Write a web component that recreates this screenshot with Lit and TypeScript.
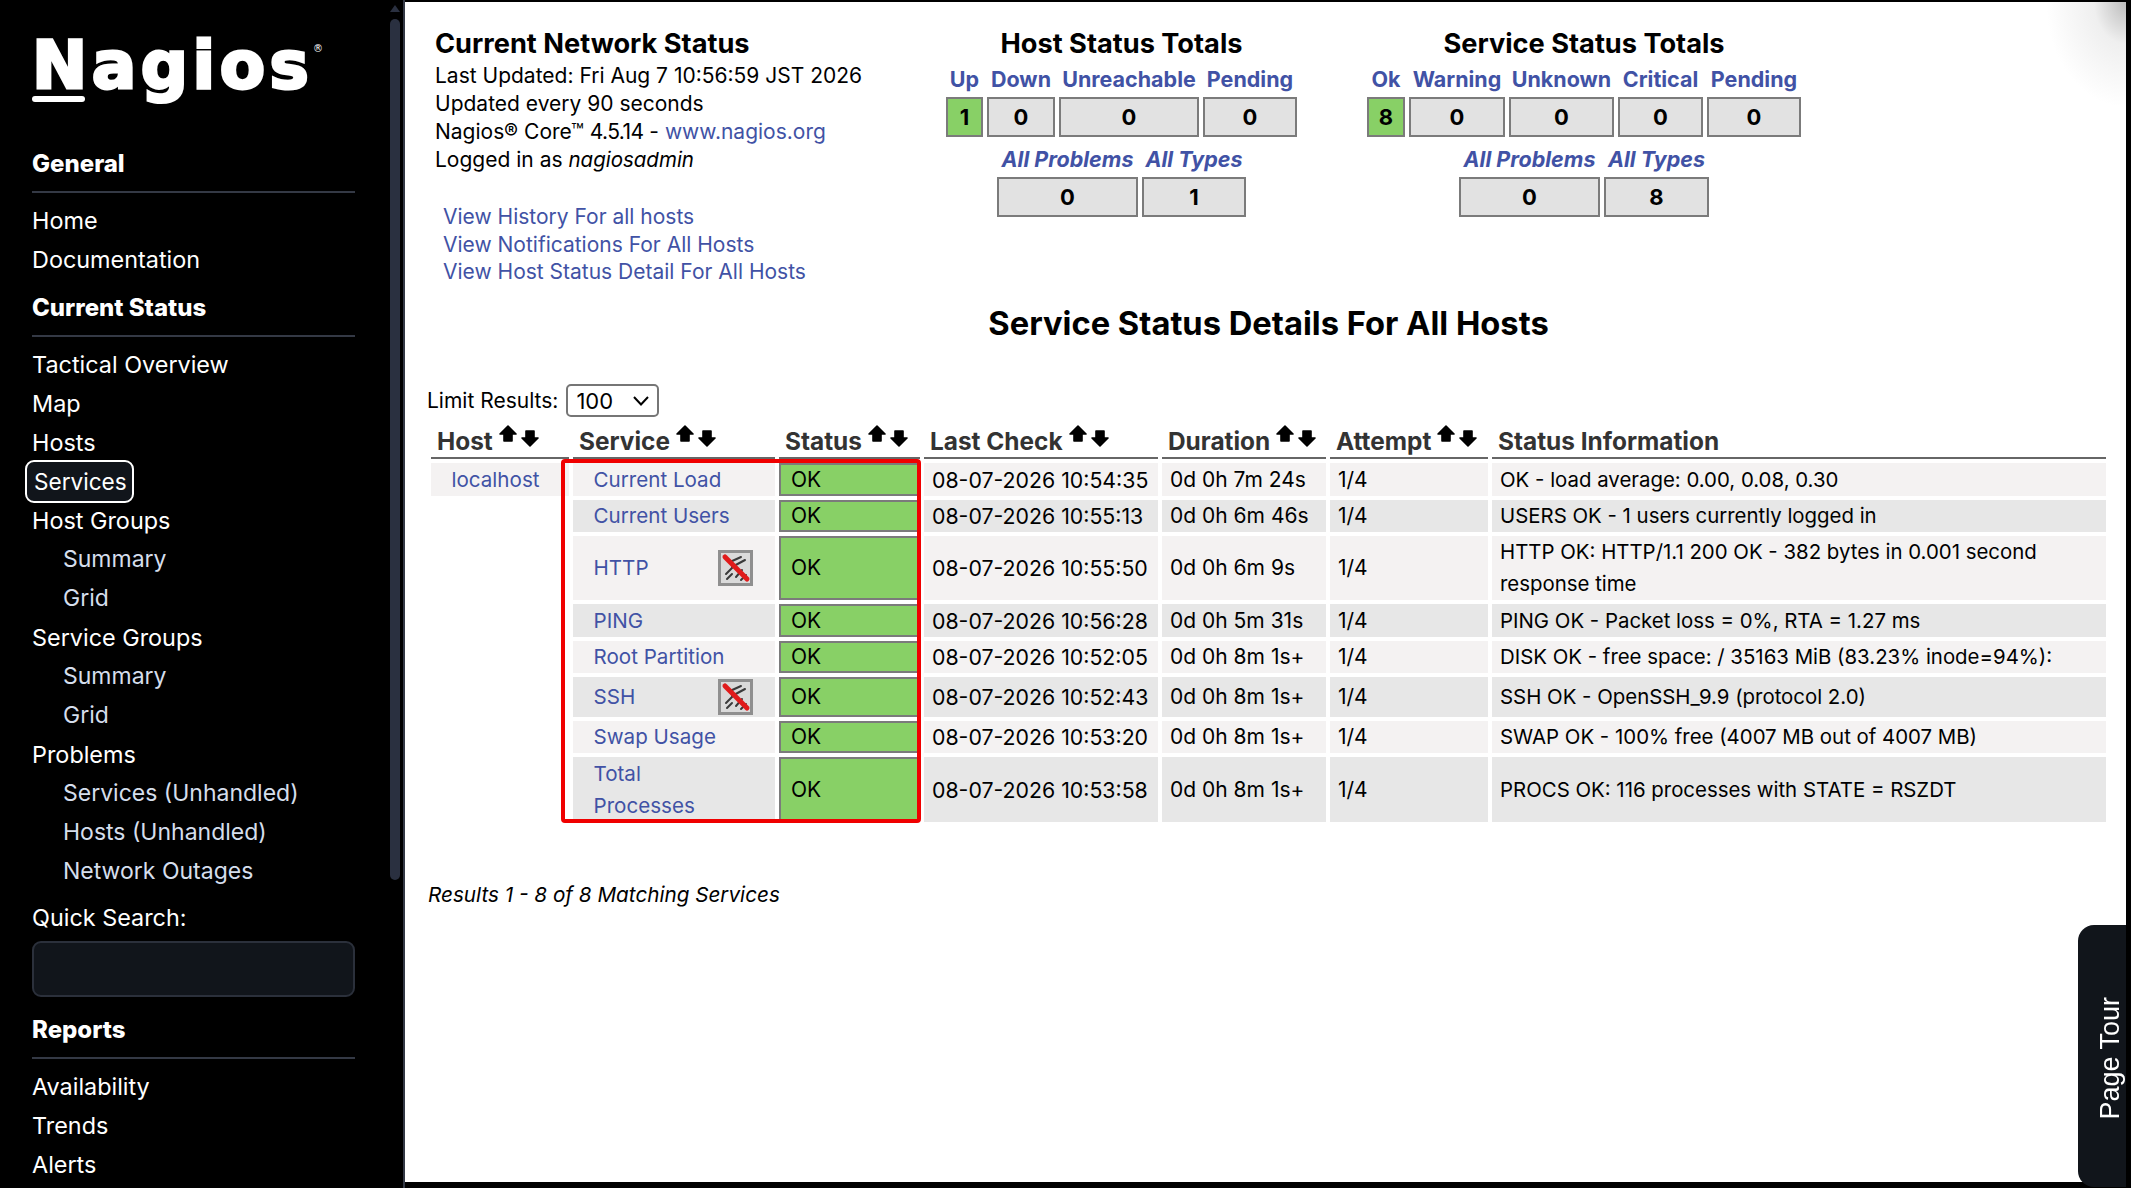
import { LitElement, html, css, svg } from 'lit'
import { customElement } from 'lit/decorators.js'

type NavItem = { label: string; sub?: boolean; active?: boolean }

const GENERAL: NavItem[] = [{ label: 'Home' }, { label: 'Documentation' }]
const CURRENT: NavItem[] = [
  { label: 'Tactical Overview' },
  { label: 'Map' },
  { label: 'Hosts' },
  { label: 'Services', active: true },
  { label: 'Host Groups' },
  { label: 'Summary', sub: true },
  { label: 'Grid', sub: true },
  { label: 'Service Groups' },
  { label: 'Summary', sub: true },
  { label: 'Grid', sub: true },
  { label: 'Problems' },
  { label: 'Services (Unhandled)', sub: true },
  { label: 'Hosts (Unhandled)', sub: true },
  { label: 'Network Outages', sub: true },
]
const REPORTS: NavItem[] = [{ label: 'Availability' }, { label: 'Trends' }, { label: 'Alerts' }]

const ROWS = [
  { service: ['Current Load'], h: 33, last: '08-07-2026 10:54:35', dur: '0d 0h 7m 24s', info: ['OK - load average: 0.00, 0.08, 0.30'] },
  { service: ['Current Users'], h: 32, last: '08-07-2026 10:55:13', dur: '0d 0h 6m 46s', info: ['USERS OK - 1 users currently logged in'] },
  { service: ['HTTP'], h: 64, icon: true, last: '08-07-2026 10:55:50', dur: '0d 0h 6m 9s', info: ['HTTP OK: HTTP/1.1 200 OK - 382 bytes in 0.001 second', 'response time'] },
  { service: ['PING'], h: 33, last: '08-07-2026 10:56:28', dur: '0d 0h 5m 31s', info: ['PING OK - Packet loss = 0%, RTA = 1.27 ms'] },
  { service: ['Root Partition'], h: 32, last: '08-07-2026 10:52:05', dur: '0d 0h 8m 1s+', info: ['DISK OK - free space: / 35163 MiB (83.23% inode=94%):'] },
  { service: ['SSH'], h: 40, icon: true, last: '08-07-2026 10:52:43', dur: '0d 0h 8m 1s+', info: ['SSH OK - OpenSSH_9.9 (protocol 2.0)'] },
  { service: ['Swap Usage'], h: 32, last: '08-07-2026 10:53:20', dur: '0d 0h 8m 1s+', info: ['SWAP OK - 100% free (4007 MB out of 4007 MB)'] },
  { service: ['Total', 'Processes'], h: 65, last: '08-07-2026 10:53:58', dur: '0d 0h 8m 1s+', info: ['PROCS OK: 116 processes with STATE = RSZDT'] },
]

const lines = (parts: string[]) => parts.map((p, i) => html`${i ? html`<br />` : ''}${p}`)

const sortArrows = html`<span class="sort">
  <svg class="up" width="18" height="17" viewBox="0 0 18 17"><path d="M9 1 17 9H13V16H5V9H1Z" fill="#000" stroke="#000" stroke-width="1.600" stroke-linejoin="round" /></svg>
  <svg class="down" width="18" height="17" viewBox="0 0 18 17"><path d="M9 16 17 8H13V1H5V8H1Z" fill="#000" stroke="#000" stroke-width="1.600" stroke-linejoin="round" /></svg>
</span>`

// the "notifications disabled" badge
const disabledIcon = svg`<svg class="ico" width="35" height="36" viewBox="0 0 35 36">
  <rect x="1.500" y="1.500" width="32" height="33" fill="#dadada" stroke="#8f8f8f" stroke-width="3" />
  <g stroke="#111" stroke-width="2" fill="none" opacity=".8" stroke-linecap="round">
    <path d="M12 12 23 7M14 17 27 10M8 24 17 15M9 29 14 24M18 27 24 20M23 30 28 25" />
  </g>
  <path d="M7 7 29 29" stroke="#e01b1b" stroke-width="5" stroke-linecap="round" />
</svg>`

@customElement('app-root')
export class AppRoot extends LitElement {
  static styles = css`
    :host {
      display: block;
      height: 100vh;
      background: #000;
      overflow: hidden;
      position: relative;
      font-family: 'Inter', 'Liberation Sans', sans-serif;
      font-size: 21px;
      color: #000;
    }
    a {
      color: #4152a5;
      text-decoration: none;
    }

    .page {
      display: flex;
      height: 100%;
      box-sizing: border-box;
      padding: 0 5px 6px 0;
    }

    /* sidebar */
    .side {
      width: 405px;
      flex: none;
      box-sizing: border-box;
      height: 1188px;
      margin-bottom: -6px;
      background: #000;
      border-right: 2px solid #343945;
      padding: 0 48px 0 32px;
      color: #fff;
      position: relative;
      overflow: hidden;
      font-size: 23.400px;
    }
    .logo {
      height: 143.500px;
      position: relative;
      box-sizing: border-box;
      padding-top: 28px;
      white-space: nowrap;
      font-family: 'DejaVu Sans', sans-serif;
      font-weight: 700;
      font-size: 66px;
      line-height: 76px;
      letter-spacing: 4.500px;
      -webkit-text-stroke: 3px #fff;
    }
    .logo b {
      letter-spacing: 0;
    }
    .logo i {
      position: absolute;
      left: 0;
      top: 96px;
      width: 53px;
      height: 6px;
      border-radius: 3px;
      background: #fff;
    }
    .logo sup {
      position: absolute;
      left: 281px;
      top: 44px;
      font-size: 10px;
      line-height: 10px;
      letter-spacing: 0;
      font-weight: 400;
      -webkit-text-stroke: 0;
    }
    .head {
      font-weight: 800;
      font-size: 24px;
      line-height: 39px;
      padding-bottom: 8px;
      margin-bottom: 8px;
      border-bottom: 2px solid #343945;
    }
    .group + .group {
      margin-top: 9px;
    }
    .item {
      height: 39.050px;
      line-height: 39.050px;
      white-space: nowrap;
    }
    .item.sub {
      padding-left: 31px;
      font-size: 23px;
      color: #d5deec;
    }
    .item span {
      display: inline-block;
    }
    .item.active span {
      margin-left: -7px;
      padding: 0 5px 0 7px;
      height: 43px;
      line-height: 39px;
      font-size: 22.600px;
      box-sizing: border-box;
      border: 2px solid #fff;
      border-radius: 9px;
      background: #11151b;
      vertical-align: top;
      margin-top: -2px;
      position: relative;
    }
    .quick {
      margin-top: 7px;
      line-height: 39px;
    }
    .search {
      margin-top: 4px;
      height: 56px;
      box-sizing: border-box;
      background: #11151b;
      border: 2px solid #2b303b;
      border-radius: 9px;
    }
    .group.reports {
      margin-top: 13px;
    }
    .bar {
      position: absolute;
      left: 390px;
      top: 19px;
      width: 10px;
      height: 861px;
      border-radius: 5px;
      background: #2a3040;
    }
    .bar-up {
      position: absolute;
      left: 390px;
      top: 5px;
      border: 5px solid transparent;
      border-top: 0;
      border-bottom: 7px solid #2a3040;
    }

    /* main area */
    .main {
      flex: 1;
      min-width: 0;
      margin-top: 2px;
      box-sizing: border-box;
      padding: 25px 16px 0 22px;
      background: radial-gradient(ellipse 80px 105px at 100% 0, #bcbcbc, #efefef 40%, #fff);
    }
    .top {
      display: flex;
      height: 276px;
    }
    .info {
      width: 511px;
      margin-left: 8px;
      flex: none;
      line-height: 28px;
    }
    .info h2,
    .totals h2 {
      margin: 0;
      font-size: 27.200px;
      line-height: 34px;
      font-weight: 700;
    }
    .info h2 {
      margin-bottom: 1px;
    }
    .info em {
      font-size: 20.500px;
    }
    .ver {
      letter-spacing: -0.600px;
    }
    .links {
      margin: 29px 0 0 8px;
      line-height: 27.700px;
    }
    .links a {
      display: block;
    }
    .totals {
      flex: none;
      text-align: center;
    }
    .totals.host {
      width: 351px;
      margin-right: 70px;
    }
    .totals.svc {
      width: 434px;
    }
    .totals h2 {
      margin-bottom: 2px;
    }
    .tgrid {
      display: grid;
      justify-content: center;
      column-gap: 4px;
      row-gap: 2px;
    }
    .host .main-grid {
      grid-template-columns: 37px 68px 140px 94px;
    }
    .svc .main-grid {
      grid-template-columns: 38px 96px 105px 85px 94px;
    }
    .host .sub-grid {
      grid-template-columns: 141px 104px;
    }
    .svc .sub-grid {
      grid-template-columns: 141px 105px;
    }
    .sub-grid {
      margin-top: 6px;
    }
    .tlabel {
      font-weight: 700;
      font-size: 21.500px;
      line-height: 32px;
      white-space: nowrap;
      display: flex;
      justify-content: center;
    }
    .tlabel.it {
      font-style: italic;
    }
    .tval {
      height: 40px;
      line-height: 36px;
      box-sizing: border-box;
      border: 2px solid #7b7b7b;
      background: #e2e2e2;
      font-weight: 700;
      font-size: 22px;
    }
    .tval.ok {
      background: #88d066;
    }
    h1 {
      margin: 0;
      text-align: center;
      font-size: 32.700px;
      line-height: 40px;
      font-weight: 700;
    }
    .limit {
      margin-top: 41px;
      height: 33px;
      display: flex;
      align-items: center;
      gap: 8px;
    }
    .pick {
      position: relative;
      display: block;
      height: 33px;
    }
    select {
      display: block;
      appearance: none;
      width: 93px;
      height: 33px;
      font: inherit;
      font-size: 22px;
      padding: 0 0 0 8px;
      border: 2px solid #767676;
      border-radius: 5px;
      background: #fff;
      color: #000;
    }
    .pick svg {
      position: absolute;
      left: 67px;
      top: 12px;
      pointer-events: none;
    }
    .wrap {
      position: relative;
      margin-top: 4px;
    }
    table {
      table-layout: fixed;
      width: 1683px;
      border-collapse: separate;
      border-spacing: 4px;
    }
    th {
      height: 34px;
      padding: 0 0 0 6px;
      box-sizing: border-box;
      border-bottom: 2px solid #666;
      text-align: left;
      font-weight: 700;
      font-size: 24.400px;
      color: #333;
      white-space: nowrap;
      vertical-align: bottom;
    }
    th div {
      display: flex;
      gap: 6px;
      height: 32px;
      line-height: 32px;
    }
    .sort {
      display: flex;
      gap: 4px;
      height: 22px;
    }
    .sort svg {
      display: block;
    }
    .sort .down {
      margin-top: 5px;
    }
    td {
      box-sizing: border-box;
      padding: 0 0 0 8px;
      line-height: 32px;
      white-space: nowrap;
    }
    tr:nth-child(odd) td {
      background: #f4f2f2;
    }
    tr:nth-child(even) td {
      background: #e7e7e7;
    }
    tr td.blank {
      background: transparent !important;
    }
    td.name {
      padding-left: 20.500px;
      font-size: 20.600px;
    }
    td.name div {
      display: flex;
      align-items: center;
      justify-content: space-between;
      padding-right: 22px;
    }
    tr td.state {
      padding-left: 10px;
      line-height: 24px;
      background: #88d066;
      border: 2px solid #7b7b7b;
    }
    td.when {
      font-size: 21.300px;
    }
    td.msg {
      font-size: 20.400px;
    }
    .ico {
      display: block;
      filter: blur(0.4px);
    }
    .outline {
      position: absolute;
      left: 134px;
      top: 38px;
      width: 360px;
      height: 364px;
      box-sizing: border-box;
      border: 4px solid #f00000;
      border-radius: 4px;
      pointer-events: none;
    }
    .results {
      margin: 55px 0 0 1px;
      font-size: 20.700px;
      font-style: italic;
      line-height: 28px;
    }

    .tour {
      position: absolute;
      left: 2078px;
      top: 925px;
      width: 48px;
      height: 262px;
      box-sizing: border-box;
      padding-top: 4px;
      background: #11151b;
      border-radius: 16px 0 0 16px;
      color: #fff;
      font-family: 'Liberation Sans', sans-serif;
      font-size: 27px;
      display: flex;
      align-items: center;
      justify-content: flex-end;
    }
    .tour span {
      writing-mode: vertical-rl;
      transform: rotate(180deg);
      white-space: nowrap;
    }
  `

  private navItems(items: NavItem[]) {
    return items.map(
      (it) => html`<div class="item ${it.sub ? 'sub' : ''} ${it.active ? 'active' : ''}"><span>${it.label}</span></div>`,
    )
  }

  private cells(values: string[], okFirst = true) {
    return values.map((v, i) => html`<div class="tval ${okFirst && i === 0 ? 'ok' : ''}">${v}</div>`)
  }

  private labels(values: string[], italic = false) {
    return values.map((v) => html`<div class="tlabel ${italic ? 'it' : ''}"><a href="#">${v}</a></div>`)
  }

  render() {
    return html`
      <div class="page">
        <nav class="side">
          <div class="logo">Nagio<b>s</b><i></i><sup>®</sup></div>
          <div class="group"><div class="head">General</div>${this.navItems(GENERAL)}</div>
          <div class="group"><div class="head">Current Status</div>${this.navItems(CURRENT)}</div>
          <div class="quick">Quick Search:</div>
          <div class="search"></div>
          <div class="group reports"><div class="head">Reports</div>${this.navItems(REPORTS)}</div>
          <div class="bar-up"></div>
          <div class="bar"></div>
        </nav>

        <main class="main">
          <div class="top">
            <div class="info">
              <h2>Current Network Status</h2>
              <div>Last Updated: Fri Aug 7 10:56:59 JST 2026</div>
              <div>Updated every 90 seconds</div>
              <div>Nagios® Core™ <span class="ver">4.5.14</span> - <a href="#">www.nagios.org</a></div>
              <div>Logged in as <em>nagiosadmin</em></div>
              <div class="links">
                <a href="#">View History For all hosts</a>
                <a href="#">View Notifications For All Hosts</a>
                <a href="#">View Host Status Detail For All Hosts</a>
              </div>
            </div>
            <div class="totals host">
              <h2>Host Status Totals</h2>
              <div class="tgrid main-grid">
                ${this.labels(['Up', 'Down', 'Unreachable', 'Pending'])} ${this.cells(['1', '0', '0', '0'])}
              </div>
              <div class="tgrid sub-grid">
                ${this.labels(['All Problems', 'All Types'], true)} ${this.cells(['0', '1'], false)}
              </div>
            </div>
            <div class="totals svc">
              <h2>Service Status Totals</h2>
              <div class="tgrid main-grid">
                ${this.labels(['Ok', 'Warning', 'Unknown', 'Critical', 'Pending'])}
                ${this.cells(['8', '0', '0', '0', '0'])}
              </div>
              <div class="tgrid sub-grid">
                ${this.labels(['All Problems', 'All Types'], true)} ${this.cells(['0', '8'], false)}
              </div>
            </div>
          </div>

          <h1>Service Status Details For All Hosts</h1>

          <div class="limit">
            <span>Limit Results:</span>
            <span class="pick">
              <select><option>100</option></select>
              <svg width="16" height="10" viewBox="0 0 16 10"><path d="M1 1 8 8.500 15 1" fill="none" stroke="#000" stroke-width="2" /></svg>
            </span>
          </div>

          <div class="wrap">
            <table>
              <colgroup>
                <col style="width:138px" /><col style="width:202px" /><col style="width:141px" /><col style="width:234px" />
                <col style="width:164px" /><col style="width:158px" /><col style="width:614px" />
              </colgroup>
              <thead>
                <tr>
                  <th><div>Host ${sortArrows}</div></th>
                  <th><div>Service ${sortArrows}</div></th>
                  <th><div>Status ${sortArrows}</div></th>
                  <th><div>Last Check ${sortArrows}</div></th>
                  <th><div>Duration ${sortArrows}</div></th>
                  <th><div>Attempt ${sortArrows}</div></th>
                  <th><div>Status Information</div></th>
                </tr>
              </thead>
              <tbody>
                ${ROWS.map(
                  (r, i) => html`<tr>
                    ${i === 0
                      ? html`<td class="name" style="height:${r.h}px"><a href="#">localhost</a></td>`
                      : html`<td class="blank" style="height:${r.h}px"></td>`}
                    <td class="name">
                      <div><a href="#">${lines(r.service)}</a>${r.icon ? disabledIcon : ''}</div>
                    </td>
                    <td class="state">OK</td>
                    <td class="when">${r.last}</td>
                    <td>${r.dur}</td>
                    <td>1/4</td>
                    <td class="msg">${lines(r.info)}</td>
                  </tr>`,
                )}
              </tbody>
            </table>
            <div class="outline"></div>
          </div>

          <div class="results">Results 1 - 8 of 8 Matching Services</div>
        </main>
      </div>
      <div class="tour"><span>Page Tour</span></div>
    `
  }
}
